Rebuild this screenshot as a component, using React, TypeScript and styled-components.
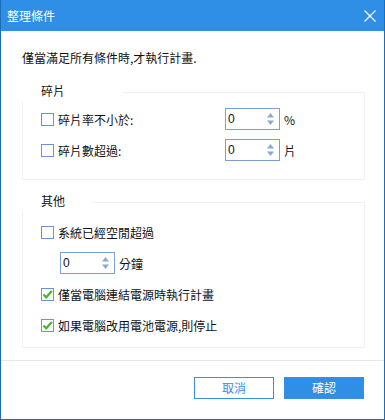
import React from "react";
import styled, { createGlobalStyle } from "styled-components";

const GlobalStyle = createGlobalStyle`
  html, body {
    margin: 0;
    padding: 0;
    background: #ffffff;
  }
  * {
    box-sizing: border-box;
  }
`;

const font = `"Noto Sans CJK TC", "Noto Sans", sans-serif`;

const Window = styled.div`
  width: 385px;
  height: 420px;
  border: 1px solid #1a6dba;
  border-top: none;
  display: flex;
  flex-direction: column;
  font-family: ${font};
  font-size: 12px;
  color: #111;
  background: #fff;
`;

const TitleBar = styled.div`
  height: 31px;
  background: #2f8fe6;
  color: #fff;
  display: flex;
  align-items: center;
  justify-content: space-between;
  padding: 0 8px 0 6px;
  font-size: 12px;
`;

const CloseButton = styled.button`
  width: 13px;
  height: 13px;
  padding: 0;
  border: none;
  background: transparent;
  display: flex;
  align-items: center;
  justify-content: center;
  cursor: pointer;
`;

const Body = styled.div`
  padding: 18px 19px 0 21px;
  display: flex;
  flex-direction: column;
`;

const Intro = styled.div`
  height: 20px;
  line-height: 20px;
  margin-top: -1px;
  margin-bottom: 1px;
`;

const Group = styled.div<{ $top: number }>`
  position: relative;
  margin-top: ${(p) => p.$top}px;
  border: 1px solid #eef1f5;
  padding: ${(p) => (p.$top > 22 ? "15px 0 18px 18px" : "18px 0 11px 18px")};
  display: flex;
  flex-direction: column;
  gap: 9px;
`;

const Legend = styled.div<{ $width: number }>`
  position: absolute;
  top: -12px;
  left: -1px;
  width: ${(p) => p.$width}px;
  height: 20px;
  line-height: 20px;
  padding-left: 19px;
  background: #fff;
`;

const Row = styled.label<{ $indent?: number }>`
  height: 22px;
  display: flex;
  align-items: center;
  padding-left: ${(p) => p.$indent ?? 0}px;
`;

const CheckLabel = styled.span<{ $width?: number }>`
  display: flex;
  align-items: center;
  gap: 4px;
  width: ${(p) => (p.$width ? `${p.$width}px` : "auto")};
`;

const Box = styled.span`
  width: 13px;
  height: 13px;
  border: 1px solid #6b93d6;
  background: #fff;
  display: inline-flex;
  align-items: center;
  justify-content: center;
  flex-shrink: 0;
`;

const Spin = styled.div`
  width: 55px;
  height: 22px;
  border: 1px solid #7b9fd9;
  display: flex;
  align-items: center;
  justify-content: space-between;
  padding: 0 4px 0 2px;
  background: #fff;
`;

const SpinValue = styled.span`
  font-family: "Liberation Sans", Arial, sans-serif;
  font-size: 12px;
  color: #111;
`;

const Unit = styled.span`
  margin-left: 4px;
`;

const Footer = styled.div`
  margin-top: 12px;
  border-top: 1px solid #e3e9ef;
  display: flex;
  justify-content: flex-end;
  gap: 10px;
  padding: 16px 20px 0 0;
`;

const Button = styled.button<{ $primary?: boolean }>`
  width: 80px;
  height: 22px;
  font-family: ${font};
  font-size: 12px;
  padding: 0;
  border: 1px solid #3a8ee6;
  background: ${(p) => (p.$primary ? "#2f8fe6" : "#fff")};
  color: ${(p) => (p.$primary ? "#fff" : "#3a8ee6")};
  line-height: 20px;
  cursor: pointer;
`;

const Checkbox = ({ checked }: { checked?: boolean }) => (
  <Box>
    {checked && (
      <svg width="11" height="11" viewBox="0 0 11 11">
        <path d="M1.5 5.5 L4.2 8.3 L9.8 2" fill="none" stroke="#45b52c" strokeWidth="2.2" />
      </svg>
    )}
  </Box>
);

const Spinner = ({ value }: { value: string }) => (
  <Spin>
    <SpinValue>{value}</SpinValue>
    <svg width="9" height="14" viewBox="0 0 9 14">
      <path d="M4.5 1 L8 5.5 L1 5.5 Z" fill="#8aa7cf" />
      <path d="M4.5 13 L8 8.5 L1 8.5 Z" fill="#8aa7cf" />
    </svg>
  </Spin>
);

export default function App() {
  return (
    <>
      <GlobalStyle />
      <Window>
        <TitleBar>
          <span>整理條件</span>
          <CloseButton>
            <svg width="12" height="12" viewBox="0 0 12 12">
              <path d="M0.5 0.5 L11.5 11.5 M11.5 0.5 L0.5 11.5" stroke="#fff" strokeWidth="1.2" />
            </svg>
          </CloseButton>
        </TitleBar>
        <Body>
          <Intro>僅當滿足所有條件時,才執行計畫.</Intro>
          <Group $top={23}>
            <Legend $width={100}>碎片</Legend>
            <Row>
              <CheckLabel $width={184}>
                <Checkbox />
                碎片率不小於:
              </CheckLabel>
              <Spinner value="0" />
              <Unit>%</Unit>
            </Row>
            <Row>
              <CheckLabel $width={184}>
                <Checkbox />
                碎片數超過:
              </CheckLabel>
              <Spinner value="0" />
              <Unit>片</Unit>
            </Row>
          </Group>
          <Group $top={22}>
            <Legend $width={70}>其他</Legend>
            <Row>
              <CheckLabel>
                <Checkbox />
                系統已經空閒超過
              </CheckLabel>
            </Row>
            <Row $indent={19}>
              <Spinner value="0" />
              <Unit>分鐘</Unit>
            </Row>
            <Row>
              <CheckLabel>
                <Checkbox checked />
                僅當電腦連結電源時執行計畫
              </CheckLabel>
            </Row>
            <Row>
              <CheckLabel>
                <Checkbox checked />
                如果電腦改用電池電源,則停止
              </CheckLabel>
            </Row>
          </Group>
        </Body>
        <Footer>
          <Button>取消</Button>
          <Button $primary>確認</Button>
        </Footer>
      </Window>
    </>
  );
}
